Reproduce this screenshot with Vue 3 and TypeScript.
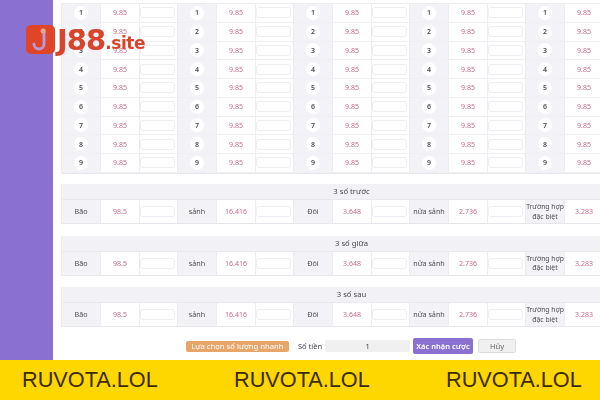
<script setup lang="ts">
const numbers: number[] = [1, 2, 3, 4, 5, 6, 7, 8, 9]
const groups: number[] = [0, 1, 2, 3, 4]
const sections: string[] = ['3 số trước', '3 số giữa', '3 số sau']
const bets = [
  { label: 'Bão', odds: '98.5', small: false },
  { label: 'sảnh', odds: '16.416', small: false },
  { label: 'Đôi', odds: '3.648', small: false },
  { label: 'nửa sảnh', odds: '2.736', small: false },
  { label: 'Trường\u00a0hợp đặc\u00a0biệt', odds: '3.283', small: true },
]
const banners: string[] = ['RUVOTA.LOL', 'RUVOTA.LOL', 'RUVOTA.LOL']
</script>

<template>
  <div class="page">
    <aside class="sidebar"></aside>
    <main class="main">
      <div class="content">
        <div class="numbers">
          <template v-for="n in numbers" :key="n">
            <template v-for="g in groups" :key="g">
              <div class="cell label"><span class="ball">{{ n }}</span></div>
              <div class="cell odds">9.85</div>
              <div class="cell entry"><span class="field"></span></div>
            </template>
          </template>
        </div>

        <section v-for="s in sections" :key="s" class="section">
          <h3 class="section-title">{{ s }}</h3>
          <div class="section-row">
            <template v-for="b in bets" :key="b.label">
              <div class="cell label text" :class="{ small: b.small }">{{ b.label }}</div>
              <div class="cell odds">{{ b.odds }}</div>
              <div class="cell entry"><span class="field"></span></div>
            </template>
          </div>
        </section>

        <div class="actions">
          <button class="btn quick">Lựa chọn số lượng nhanh</button>
          <span class="amount-label">Số tiền</span>
          <span class="amount">1</span>
          <button class="btn confirm">Xác nhận cược</button>
          <button class="btn cancel">Hủy</button>
        </div>
      </div>
    </main>

    <div class="logo">
      <svg class="logo-mark" width="29" height="29" viewBox="0 0 29 29">
        <rect width="29" height="29" rx="5" fill="#df4526" />
        <path d="M18 5v14a5 5 0 0 1-10 0" fill="none" stroke="#b79ad6" stroke-width="3" stroke-linecap="round" />
        <circle cx="17" cy="6" r="2.5" fill="#f0a58c" />
      </svg>
      <span class="logo-big">J88</span><span class="logo-small">.site</span>
    </div>

    <div class="banner">
      <span v-for="(b, i) in banners" :key="i" class="banner-text">{{ b }}</span>
    </div>
  </div>
</template>

<style scoped>
.page {
  position: relative;
  display: flex;
  width: 600px;
  height: 400px;
  overflow: hidden;
  background: #fff;
  font-family: "Noto Sans", "Open Sans", sans-serif;
}
.sidebar {
  flex: 0 0 53px;
  background: #8a70d0;
}
.main {
  flex: 1;
  min-width: 0;
  padding: 3px 0 0 8px;
  overflow: hidden;
  filter: blur(0.45px);
}
.content {
  width: 580px;
  display: flex;
  flex-direction: column;
}
.numbers {
  display: grid;
  grid-template-columns: repeat(5, 39px 39px 38px);
  grid-auto-rows: 18.75px;
  border-top: 1px solid #ececf1;
  border-bottom: 1px solid #e6e6ec;
  border-left: 1px solid #ececf1;
  margin-bottom: 10.5px;
}
.cell {
  display: flex;
  align-items: center;
  justify-content: center;
  box-sizing: border-box;
  border-right: 1px solid #ececf1;
  border-bottom: 1px solid #f0f0f4;
  font-size: 7px;
}
.label {
  background: #f3f3f7;
  color: #4c4c56;
  font-size: 7.2px;
}
.text {
  text-align: center;
  line-height: 9.5px;
}
.small {
  font-size: 6.8px;
}
.ball {
  display: flex;
  align-items: center;
  justify-content: center;
  width: 14px;
  height: 14px;
  border-radius: 50%;
  background: #fff;
  font-weight: 600;
  font-size: 7px;
}
.odds {
  background: #fff;
  color: #c86a88;
}
.entry {
  background: #fff;
  padding-right: 2px;
}
.field {
  width: 35px;
  height: 11px;
  box-sizing: border-box;
  border: 1px solid #eeeef2;
  border-radius: 3px;
  background: #fff;
}
.section {
  margin-bottom: 11.5px;
  border-left: 1px solid #ececf1;
  border-bottom: 1px solid #e6e6ec;
}
.section-title {
  margin: 0;
  height: 16px;
  background: #f2f2f6;
  border-bottom: 1px solid #e8e8ee;
  box-sizing: border-box;
  text-align: center;
  font-size: 7.7px;
  line-height: 15px;
  font-weight: 400;
  color: #44444c;
}
.section-row {
  display: grid;
  grid-template-columns: repeat(5, 39px 39px 38px);
  height: 23px;
}
.section-row .cell {
  border-bottom: 0;
}
.actions {
  display: flex;
  align-items: center;
  justify-content: center;
  height: 16px;
  margin-top: -0.5px;
}
.btn {
  font-family: inherit;
  font-size: 7.7px;
  padding: 0;
  border-radius: 2px;
  box-sizing: border-box;
  border: 0;
}
.quick {
  width: 103px;
  height: 11px;
  background: #e8a56a;
  color: #fff;
  line-height: 11px;
}
.amount-label {
  margin-left: 9px;
  font-size: 7.5px;
  color: #44444c;
}
.amount {
  width: 85px;
  height: 12px;
  margin-left: 3px;
  background: #f0f0f0;
  border-radius: 2px;
  text-align: center;
  font-size: 7.5px;
  line-height: 12px;
  color: #44444c;
}
.confirm {
  width: 60px;
  height: 16px;
  margin-left: 3px;
  background: #8a70d0;
  color: #fff;
  font-weight: 600;
  font-size: 7.5px;
}
.cancel {
  width: 38px;
  height: 14px;
  margin-left: 5px;
  background: #f0f0f0;
  border: 1px solid #dcdcdc;
  color: #666;
}
.logo {
  position: absolute;
  left: 26px;
  top: 25px;
  display: flex;
  align-items: center;
  height: 29px;
  color: #d8452c;
  font-family: "DejaVu Sans", sans-serif;
  font-weight: 700;
  filter: blur(0.4px);
}
.logo-mark {
  margin-right: 2px;
}
.logo-big {
  font-size: 29px;
  letter-spacing: -1px;
}
.logo-small {
  font-size: 17px;
  margin-top: 7px;
  letter-spacing: -0.4px;
}
.banner {
  position: absolute;
  left: 0;
  right: 0;
  bottom: 0;
  height: 40px;
  padding-left: 22px;
  display: flex;
  gap: 75px;
  align-items: center;
  background: #ffd700;
}
.banner-text {
  flex: 0 0 137px;
  min-width: 0;
  font-family: "Liberation Sans", Arial, sans-serif;
  font-size: 21.7px;
  color: #3d2a08;
  white-space: nowrap;
}
</style>
